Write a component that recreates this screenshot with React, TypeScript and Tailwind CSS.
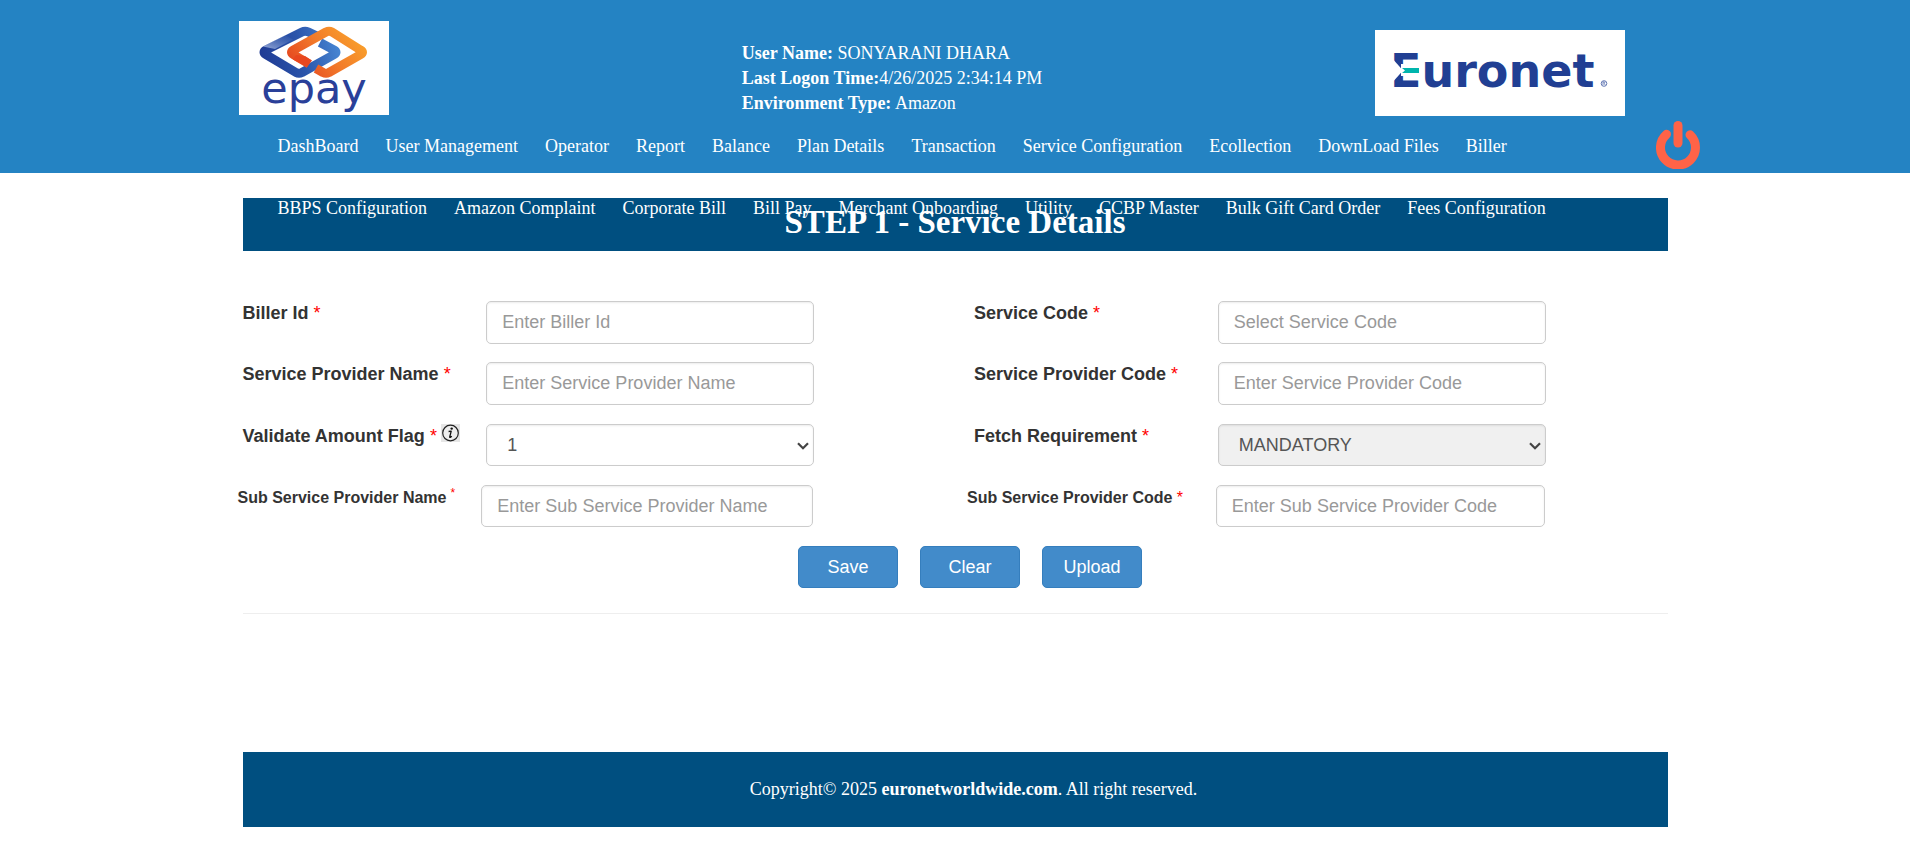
import { Fragment, type ReactNode } from "react";

const primaryMenu = [
  "DashBoard",
  "User Management",
  "Operator",
  "Report",
  "Balance",
  "Plan Details",
  "Transaction",
  "Service Configuration",
  "Ecollection",
  "DownLoad Files",
  "Biller",
];

const secondaryMenu = [
  "BBPS Configuration",
  "Amazon Complaint",
  "Corporate Bill",
  "Bill Pay",
  "Merchant Onboarding",
  "Utility",
  "CCBP Master",
  "Bulk Gift Card Order",
  "Fees Configuration",
];

const control =
  "block w-full rounded-[5px] border border-[#ccc] text-[18px] text-[#555] shadow-[inset_0_1px_2px_rgba(0,0,0,0.075)] outline-none placeholder:text-[#999] focus:border-[#66afe9]";

function EpayLogo() {
  return (
    <svg viewBox="0 0 150 94" className="block h-[94px] w-[150px] bg-white" role="img" aria-label="epay">
      <defs>
        <linearGradient id="epayBlue" gradientUnits="userSpaceOnUse" x1="21" y1="40" x2="102" y2="20">
          <stop offset="0" stopColor="#1f3a93" />
          <stop offset="0.500" stopColor="#2b55ab" />
          <stop offset="1" stopColor="#4a8ad6" />
        </linearGradient>
        <linearGradient id="epayOrange" gradientUnits="userSpaceOnUse" x1="60" y1="56" x2="115" y2="8">
          <stop offset="0" stopColor="#e4431f" />
          <stop offset="0.500" stopColor="#f27a2a" />
          <stop offset="1" stopColor="#f9a12b" />
        </linearGradient>
        <linearGradient id="epayShine" x1="0" y1="1" x2="1" y2="0">
          <stop offset="0" stopColor="#b9c8ea" stopOpacity="0.800" />
          <stop offset="1" stopColor="#6f93d0" stopOpacity="0" />
        </linearGradient>
      </defs>
      <g fill="none" strokeWidth="9" strokeLinejoin="round">
        <path d="M79 15.500 L69 10.800 Q66 9.500 63 11 L27 29 Q23 31.300 27 33.600 L57 51.500 Q60 53 63 51.500 L95 33.600 Q99 31.300 95 29 L81 21.500" stroke="url(#epayBlue)" />
        <path d="M70 43 L54.500 33.600 Q50.500 31.300 54.500 29 L87 11 Q90 9.500 93 11 L121.500 29 Q125.500 31.300 121.500 33.600 L90 51.500 Q87 53 84 51.500 L77 47.500" stroke="url(#epayOrange)" />
      </g>
      <path d="M24 25.500 L46 14 L54 18.500 L36 28 Z" fill="url(#epayShine)" />
      <path d="M57 34 L66 35 L73 39.500 L68 46 L54 38.500 Z" fill="#e8471f" />
      <text x="75" y="82" textAnchor="middle" fontSize="43" fill="#2a4099" className="font-['DejaVu_Sans',sans-serif]">
        epay
      </text>
    </svg>
  );
}

function EuronetLogo() {
  return (
    <svg viewBox="0 0 250 86" className="block h-[86px] w-[250px] bg-white" role="img" aria-label="Euronet">
      <text x="15" y="57" fontSize="46" fontWeight="700" fill="#213f93" className="font-['DejaVu_Sans',sans-serif]">
        Euronet
      </text>
      <path d="M16 27 L28 40.500 L16 54 Z" fill="#fff" />
      <path d="M26 34 H46 V46 H26 Z" fill="#fff" />
      <path d="M27 38 H44 V43 H27 L30 40.500 Z" fill="#00b5ad" />
      <circle cx="229" cy="53.500" r="2.800" fill="none" stroke="#213f93" strokeWidth="0.700" />
      <path d="M228 55 V52 H229.500 Q230.500 53 229.300 53.700 L230.300 55" fill="none" stroke="#213f93" strokeWidth="0.600" />
    </svg>
  );
}

function PowerIcon() {
  return (
    <svg viewBox="0 0 44 48" className="block h-[48px] w-[44px]" fill="none" stroke="#ff6347" strokeWidth="9" strokeLinecap="round" aria-hidden="true">
      <path d="M10.500 13.300 A17.500 17.500 0 1 0 34 13.800" />
      <path d="M22 4.500 V22" />
    </svg>
  );
}

function InfoIcon() {
  return (
    <svg viewBox="0 0 19 18" className="block h-[18px] w-[19px] shrink-0 bg-[#e6e6e6]" role="img" aria-label="Information">
      <circle cx="9.500" cy="9" r="7.800" fill="#eee" stroke="#222" strokeWidth="1.200" />
      <circle cx="10.700" cy="4.600" r="1.200" fill="#111" />
      <path d="M7.600 7.500 L10.200 7.200 L8.700 13 Q8.900 13.900 10.800 12.300" fill="none" stroke="#111" strokeWidth="1.300" strokeLinejoin="round" />
    </svg>
  );
}

function Menu({ items }: { items: string[] }) {
  return (
    <ul className="flex gap-[27px] whitespace-nowrap text-[18px] leading-[25px] text-white">
      {items.map((item) => (
        <li key={item}>
          <a href="#" className="block hover:underline">
            {item}
          </a>
        </li>
      ))}
    </ul>
  );
}

function Label({ id, children, icon }: { id: string; children: ReactNode; icon?: ReactNode }) {
  return (
    <div className="col-span-2 flex gap-[4px] whitespace-nowrap pl-[19px]">
      <label htmlFor={id} className="text-[18px] font-bold leading-[25px] text-[#333]">
        {children} <span className="font-normal text-[#f00]">*</span>
      </label>
      {icon}
    </div>
  );
}

function TextField({ id, label, placeholder }: { id: string; label: string; placeholder: string }) {
  return (
    <Fragment>
      <Label id={id}>{label}</Label>
      <div className="col-span-3 px-[19px]">
        <input id={id} type="text" placeholder={placeholder} className={`${control} h-[43px] bg-white px-[15px]`} />
      </div>
      <div />
    </Fragment>
  );
}

function Chevron() {
  return (
    <svg viewBox="0 0 12 8" className="pointer-events-none absolute right-[5px] top-[18px] h-[8px] w-[12px]" fill="none" stroke="#444" strokeWidth="2.200" aria-hidden="true">
      <path d="M1 1.200 L6 6.200 L11 1.200" />
    </svg>
  );
}

export default function App() {
  return (
    <div className="min-h-screen bg-white font-['Liberation_Sans',Arial,sans-serif]">
      <header className="relative z-10 bg-[#2483c3] font-['Liberation_Serif','Times_New_Roman',serif]">
        <div className="mx-auto max-w-[1463px]">
          <div className="grid grid-cols-[518fr_633fr_311fr] items-start">
            <div className="pl-[15px] pt-[21px]">
              <EpayLogo />
            </div>
            <div className="pt-[41px] text-[18px] leading-[25px] text-white">
              <p>
                <b>User Name:</b> SONYARANI DHARA
              </p>
              <p>
                <b>Last Logon Time:</b>4/26/2025 2:34:14 PM
              </p>
              <p>
                <b>Environment Type:</b> Amazon
              </p>
            </div>
            <div className="pt-[30px]">
              <EuronetLogo />
            </div>
          </div>
          <div className="-mr-[13px] flex items-start justify-between pb-[4px] pl-[54px] pt-[5px]">
            <nav aria-label="Primary" className="pt-[13px]">
              <Menu items={primaryMenu} />
            </nav>
            <button type="button" aria-label="Log out" className="cursor-pointer">
              <PowerIcon />
            </button>
          </div>
        </div>
        <div className="absolute inset-x-0 top-full pt-[23px]">
          <nav aria-label="Secondary" className="mx-auto max-w-[1463px] pl-[54px]">
            <Menu items={secondaryMenu} />
          </nav>
        </div>
      </header>

      <main className="mx-auto max-w-[1463px] pt-[25px]">
        <div className="px-[19px]">
          <h1 className="bg-[#004f80] pb-[11px] pt-[6px] text-center font-['Liberation_Serif','Times_New_Roman',serif] text-[33px] font-bold leading-[36px] text-white">
            STEP 1 - Service Details
          </h1>
        </div>

        <form className="flex flex-col gap-[19px] pt-[50px]" onSubmit={(e) => e.preventDefault()}>
          <div className="grid grid-cols-12 gap-y-[18px]">
            <TextField id="billerId" label="Biller Id" placeholder="Enter Biller Id" />
            <TextField id="serviceCode" label="Service Code" placeholder="Select Service Code" />
            <TextField id="providerName" label="Service Provider Name" placeholder="Enter Service Provider Name" />
            <TextField id="providerCode" label="Service Provider Code" placeholder="Enter Service Provider Code" />
          </div>

          <div className="grid grid-cols-12">
            <Label id="amountFlag" icon={<InfoIcon />}>
              Validate Amount Flag
            </Label>
            <div className="col-span-3 px-[19px]">
              <div className="relative">
                <select id="amountFlag" defaultValue="1" className={`${control} h-[42px] appearance-none bg-white px-[20px]`}>
                  <option>1</option>
                  <option>0</option>
                </select>
                <Chevron />
              </div>
            </div>
            <div />
            <Label id="fetchRequirement">Fetch Requirement</Label>
            <div className="col-span-3 px-[19px]">
              <div className="relative">
                <select id="fetchRequirement" disabled className={`${control} h-[42px] appearance-none bg-[#f0f0f0] px-[20px] opacity-100`}>
                  <option>MANDATORY</option>
                </select>
                <Chevron />
              </div>
            </div>
          </div>

          <div className="grid grid-cols-12">
            <label htmlFor="subName" className="col-span-2 flex items-start gap-[4px] whitespace-nowrap pl-[14px] text-[16px] font-bold leading-[25px] text-[#333]">
              Sub Service Provider Name
              <span className="text-[12px] font-normal leading-[16px] text-[#f00]">*</span>
            </label>
            <div className="col-span-3 pl-[14px] pr-[20px]">
              <input id="subName" type="text" placeholder="Enter Sub Service Provider Name" className={`${control} h-[42px] bg-white px-[15px]`} />
            </div>
            <div />
            <label htmlFor="subCode" className="col-span-2 whitespace-nowrap pl-[12px] text-[16px] font-bold leading-[25px] text-[#333]">
              Sub Service Provider Code <span className="font-normal text-[#f00]">*</span>
            </label>
            <div className="col-span-3 pl-[17px] pr-[20px]">
              <input id="subCode" type="text" placeholder="Enter Sub Service Provider Code" className={`${control} h-[42px] bg-white px-[15px]`} />
            </div>
          </div>

          <div className="flex justify-center gap-[22px] pl-[30px]">
            {["Save", "Clear", "Upload"].map((action) => (
              <button
                key={action}
                type="button"
                className="h-[42px] w-[100px] cursor-pointer rounded-[5px] border border-[#357ebd] bg-[#428bca] text-[18px] text-white hover:bg-[#3276b1]"
              >
                {action}
              </button>
            ))}
          </div>
        </form>

        <div className="px-[19px] pt-[25px]">
          <hr className="border-0 border-t border-solid border-[#eee]" />
        </div>
      </main>

      <footer className="mx-auto max-w-[1463px] px-[19px] pt-[138px]">
        <p className="bg-[#004f80] py-[25px] pl-[37px] text-center font-['Liberation_Serif','Times_New_Roman',serif] text-[18px] leading-[25px] text-white">
          Copyright© 2025 <b>euronetworldwide.com</b>. All right reserved.
        </p>
      </footer>
    </div>
  );
}
